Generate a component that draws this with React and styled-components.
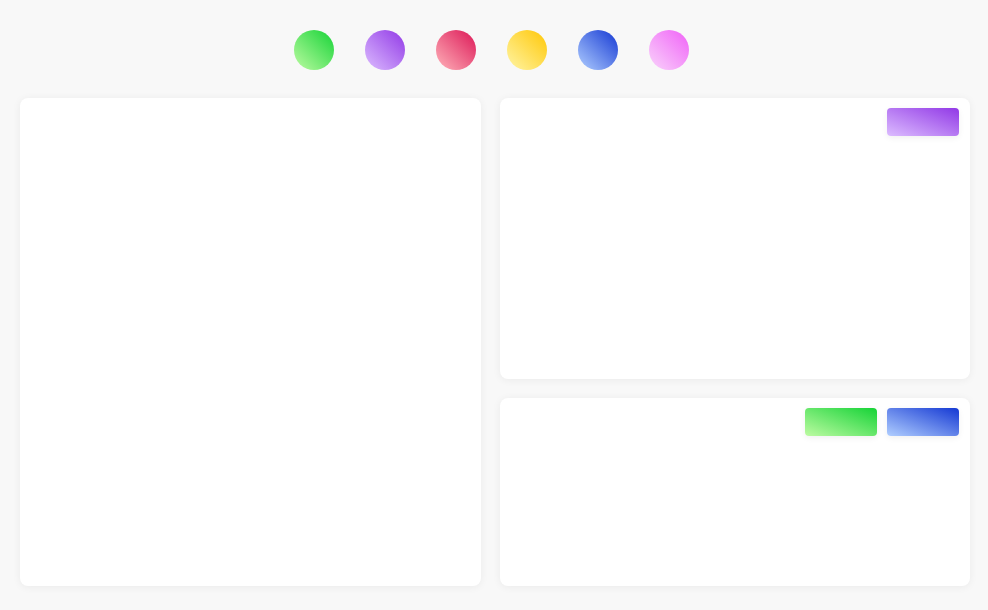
import React from "react";
import styled, { createGlobalStyle } from "styled-components";

const Global = createGlobalStyle`
  html, body { margin: 0; padding: 0; background: #f8f8f8; font-family: "Liberation Sans", Arial, sans-serif; }
  #root { min-height: 610px; }
`;

const Page = styled.div`
  box-sizing: border-box;
  width: 988px;
  height: 610px;
  padding: 30px 18px 24px 20px;
  display: flex;
  flex-direction: column;
  gap: 28px;
`;

const Swatches = styled.div`
  display: flex;
  justify-content: center;
  gap: 31px;
  padding-right: 7px;
`;

const Swatch = styled.div`
  width: 40px;
  height: 40px;
  border-radius: 50%;
  background: linear-gradient(to top right, ${p => p.$light}, ${p => p.$dark});
`;

const Grid = styled.div`
  flex: 1;
  display: grid;
  grid-template-columns: 461px 470px;
  grid-template-rows: 281px 188px;
  column-gap: 19px;
  row-gap: 19px;
`;

const Panel = styled.div`
  background: #fff;
  border-radius: 8px;
  box-shadow: 0 1px 8px rgba(0, 0, 0, 0.06);
  grid-row: ${p => p.$rows || "auto"};
  display: flex;
  justify-content: flex-end;
  align-items: flex-start;
  gap: 10px;
  padding: 10px 11px;
`;

const Btn = styled.button`
  width: 72px;
  height: 28px;
  border: 0;
  border-radius: 4px;
  padding: 0;
  background: linear-gradient(to top right, ${p => p.$light}, ${p => p.$dark});
  box-shadow: 0 2px 6px rgba(0, 0, 0, 0.06);
`;

const colors = {
  green: ["#bdfba2", "#15d336"],
  purple: ["#dcbcff", "#9138e6"],
  red: ["#ffb3ba", "#dc1656"],
  yellow: ["#fff5a6", "#ffc705"],
  blue: ["#b0ceff", "#1438d3"],
  pink: ["#f9d4fb", "#f061f7"],
};

export default function App() {
  return (
    <>
      <Global />
      <Page>
        <Swatches>
          {Object.entries(colors).map(([k, [l, d]]) => (
            <Swatch key={k} $light={l} $dark={d} />
          ))}
        </Swatches>
        <Grid>
          <Panel $rows="1 / span 2" />
          <Panel>
            <Btn $light={colors.purple[0]} $dark={colors.purple[1]} />
          </Panel>
          <Panel>
            <Btn $light={colors.green[0]} $dark={colors.green[1]} />
            <Btn $light={colors.blue[0]} $dark={colors.blue[1]} />
          </Panel>
        </Grid>
      </Page>
    </>
  );
}
